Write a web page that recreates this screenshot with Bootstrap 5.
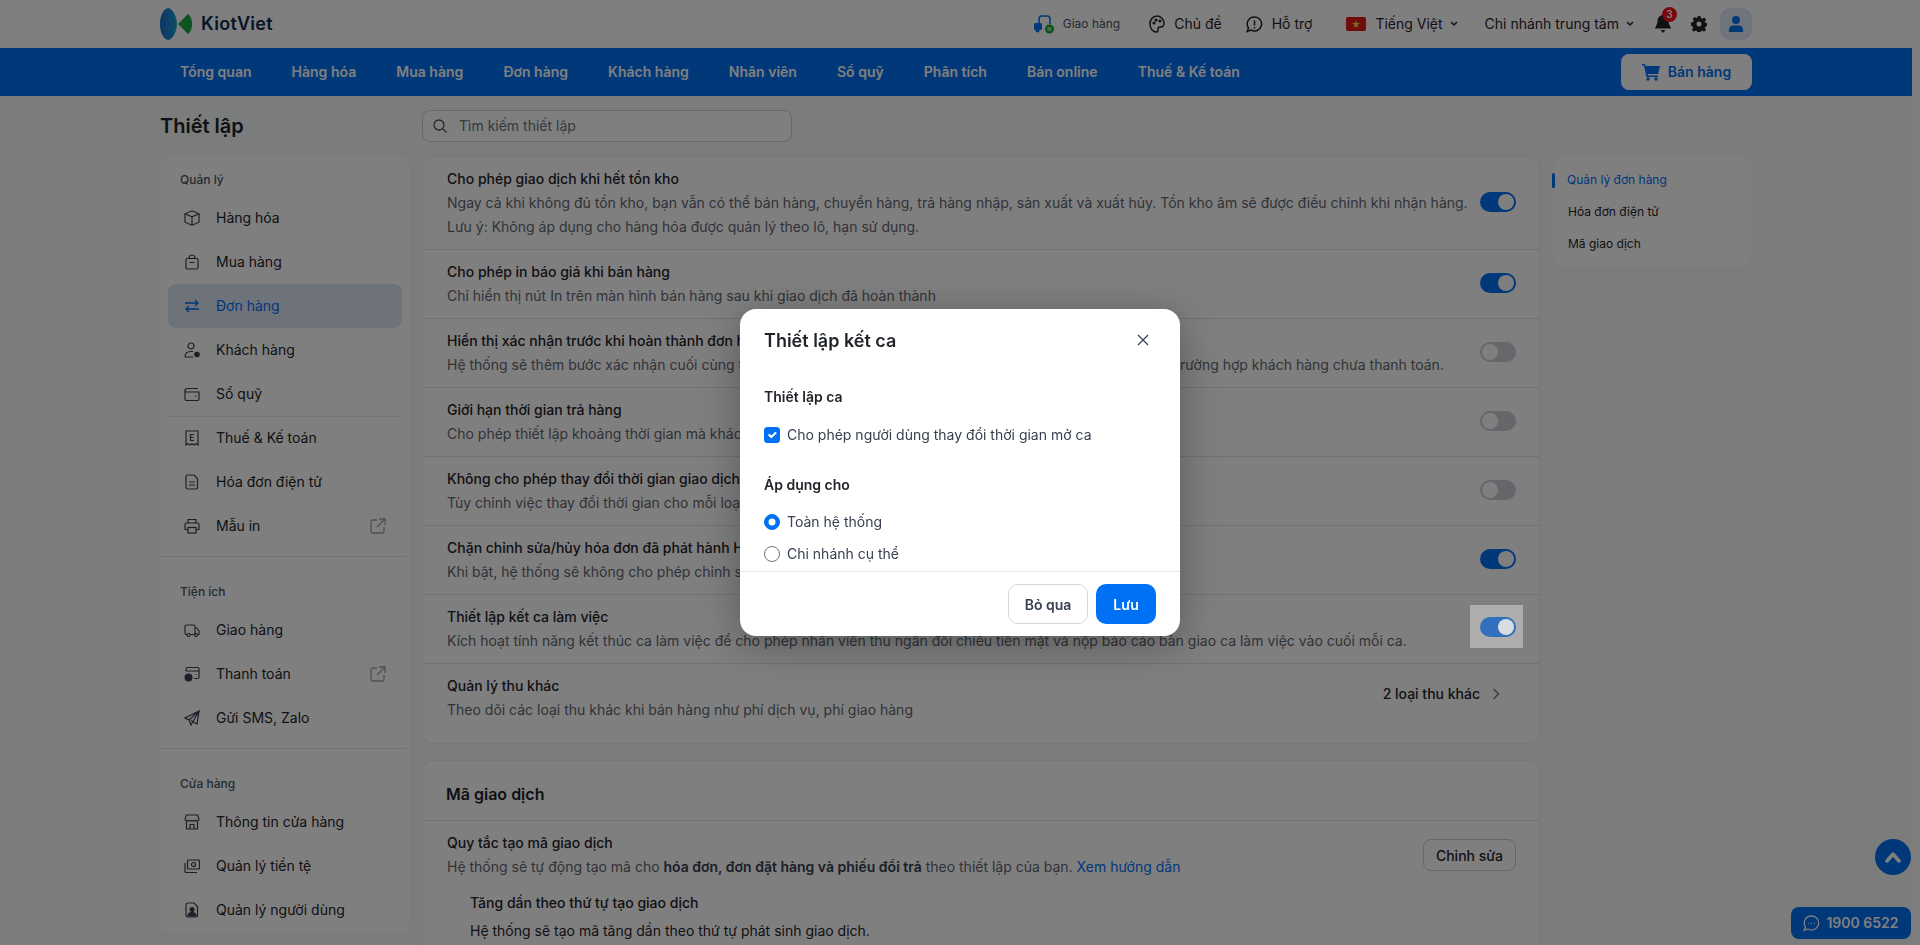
<!DOCTYPE html>
<html lang="vi">
<head>
    <meta charset="UTF-8">
    <title>KiotViet - Thiết lập</title>
    <link rel="stylesheet" href="https://cdn.jsdelivr.net/npm/bootstrap@5.3.0/dist/css/bootstrap.min.css">
    <style>
        html, body { height: 945px; overflow: hidden; }
        body { font-family: "Inter", "Liberation Sans", sans-serif; font-size: 14px; line-height: 24px; color: #1f2328; background: #fff; }
        .page-wrap { width: 1912px; height: 945px; overflow: hidden; background: #f6f9f8; }
        .top-bar { height: 48px; background: #fff; padding: 0 160px; }
        .logo-text { font-size: 18px; font-weight: 600; letter-spacing: .3px; color: #0d2b4e; margin-left: 9px; line-height: 24px; }
        .tb-small { font-size: 12px; color: #4b5563; }
        .tb-gh { margin-left: 9px; }
        .tb-theme { margin-left: 29px; }
        .tb-help { margin-left: 24px; }
        .tb-lang { margin-left: 34px; }
        .tb-branch { margin-left: 27px; }
        .tb-bell { margin-left: 21px; }
        .tb-gear { margin-left: 20px; }
        .tb-avatar { margin-left: 13px; width: 32px; height: 32px; border-radius: 10px; background: #dfe9f6; }
        .tb-label { margin-left: 9px; }
        .tb-chev { margin-left: 7px; }
        .bell-count { top: -8px; left: 7px; width: 15px; height: 15px; border-radius: 50%; background: #f01018; color: #fff; font-size: 10px; font-weight: 600; line-height: 15px; text-align: center; }
        .main-nav { height: 48px; background: #0070f4; padding: 0 160px 0 160px; }
        .nav-item-kv { color: #fff; font-weight: 600; padding: 0 20.06px; text-decoration: none; }
        .sell-btn { width: 131px; height: 36px; background: #fff; color: #0070f4; border-radius: 8px; font-weight: 600; text-decoration: none; }
        .content-wrap { padding: 14px 160px 0; }
        .page-head { height: 32px; margin-bottom: 14px; }
        .page-title { width: 250px; margin: 0; font-size: 20px; font-weight: 600; color: #1f2328; }
        .search-box { width: 370px; height: 32px; margin-left: 12px; border: 1px solid #cfd3d8; border-radius: 8px; background: #fff; padding-left: 10px; color: #6b7280; gap: 12px; }
        .side-panel { width: 250px; flex: none; height: 777px; background: #fff; border-radius: 12px; }
        .side-group { padding: 12px 0 8px; }
        .side-group + .side-group { padding-top: 23px; border-top: 1px solid #e4e6e8; margin-right: 4px; }
        .side-group:last-child { padding-bottom: 0; border-top-color: #e4e6e8; }
        .side-label { padding-left: 20px; margin-bottom: 4px; font-size: 12px; font-weight: 500; color: #4b5563; }
        .side-link { height: 44px; margin: 0 8px; width: 234px; padding-left: 16px; border-radius: 8px; color: #1f2328; text-decoration: none; }
        .side-link svg:first-child { margin-right: 16px; flex: none; }
        .side-link.is-active { background: #dde7f5; color: #0070f4; }
        .side-out { margin-left: auto; margin-right: 16px; }
        .side-rule { height: 1px; margin: 0 -4px -1px 8px; width: 230px; background: #e4e6e8; }
        .main-col { width: 1118px; flex: none; margin-left: 12px; }
        .set-card { background: #fff; border: 1px solid #eef0f0; border-radius: 12px; margin-bottom: 16px; }
        .set-row { padding: 10px 23px 10px 24px; border-bottom: 1px solid #e1e3e5; }
        .set-row:last-child { border-bottom: 0; padding-bottom: 21px; }
        .set-name { font-weight: 500; color: #1f2328; }
        .set-desc { color: #5f6670; }
        .set-desc b { font-weight: 600; color: #374151; }
        .set-desc a { color: #0070f4; text-decoration: none; }
        .sub-rule { padding: 12px 0 0 23px; }
        .card-head { padding: 21px 24px 14px 23px; border-bottom: 1px solid #e1e3e5; font-size: 16px; font-weight: 600; }
        .form-switch.kv-switch { margin: 0 0 3px; padding: 0; min-height: 0; height: 20px; }
        .form-switch.kv-switch .form-check-input { width: 36px; height: 20px; margin: 0; float: none; display: block; border: 0; background-color: #cdced6; background-position: left center; background-size: 20px 20px; background-image: url("data:image/svg+xml,%3csvg xmlns='http://www.w3.org/2000/svg' viewBox='-10 -10 20 20'%3e%3ccircle r='8' fill='%23fff'/%3e%3c/svg%3e"); }
        .form-switch.kv-switch .form-check-input:checked { background-color: #0070f4; background-position: right center; }
        .tour-spot { position: relative; z-index: 1051; width: 53px; height: 43px; margin: -5px -7px 0 0; padding-left: 3px; background: #adadad; }
        .tour-spot .form-check-input:checked { background-color: #3170bc !important; background-image: url("data:image/svg+xml,%3csvg xmlns='http://www.w3.org/2000/svg' viewBox='-10 -10 20 20'%3e%3ccircle r='8' fill='%23d9dde2'/%3e%3c/svg%3e") !important; }
        .fee-link { color: #1f2328; font-weight: 500; }
        .edit-btn { width: 93px; height: 32px; margin-top: 8px; padding: 0; font-size: 14px; font-weight: 500; color: #1f2328; background: #fff; border: 1px solid #c9cdd2; border-radius: 8px; }
        .toc-panel { width: 199px; height: 110px; flex: none; margin-left: 13px; padding: 8px 0 6px; background: #fff; border-radius: 12px; font-size: 12px; }
        .toc-item { height: 32px; padding-left: 15px; color: #1f2328; text-decoration: none; }
        .toc-item.is-active { padding-left: 0; color: #0070f4; }
        .toc-mark { width: 3px; height: 15px; margin: 0 12px 0 -1px; background: #0070f4; border-radius: 2px; }
        .to-top { right: 9px; bottom: 70px; width: 36px; height: 36px; border-radius: 50%; background: #0070f4; }
        .hotline { right: 9px; bottom: 6px; width: 120px; height: 32px; border-radius: 8px; background: #0070f4; color: #fff; font-weight: 600; gap: 6px; }
        .modal-dialog.kv-dialog { --bs-modal-width: 440px; }
        .kv-dialog .modal-content { border: 0; border-radius: 16px; box-shadow: 0 8px 40px rgba(0, 0, 0, .3); }
        .kv-dialog .modal-header { height: 62px; padding: 0 24px; border: 0; }
        .kv-dialog .modal-title { font-size: 18px; font-weight: 600; color: #1f2328; }
        .kv-dialog .modal-body { height: 200px; flex: none; padding: 14px 24px 0; overflow: hidden; }
        .kv-dialog .modal-footer { height: 65px; padding: 0 24px; gap: 8px; border-top: 1px solid #e5e7eb; }
        .kv-dialog .modal-footer > * { margin: 0; }
        .close-x { width: 16px; height: 16px; padding: 0; border: 0; background: none; margin-right: 5px; }
        .opt-title { font-weight: 600; color: #1f2328; }
        .kv-dialog .form-check { padding-left: 23px; margin-bottom: 0; min-height: 24px; color: #374151; }
        .kv-dialog .form-check-input { width: 16px; height: 16px; margin: 4px 0 0 -23px; border-color: #6b7280; }
        .kv-dialog .form-check-input[type=checkbox] { border-radius: 3px; }
        .kv-dialog .form-check-input:checked { background-color: #0070f4; border-color: #0070f4; }
        .gap-a { margin-top: 14px; }
        .gap-b { margin-top: 26px; }
        .gap-c { margin-top: 13px; }
        .gap-d { margin-top: 8px; }
        .skip-btn { width: 80px; height: 40px; padding: 0; font-size: 14px; font-weight: 600; color: #374151; background: #fff; border: 1px solid #d5d8dc; border-radius: 10px; }
        .save-btn { width: 60px; height: 40px; padding: 0; font-size: 14px; font-weight: 600; color: #fff; background: #0070f4; border: 0; border-radius: 10px; }
    </style>
</head>
<body>
    <div class="page-wrap">
        <!-- top bar -->
        <header class="top-bar d-flex align-items-center">
            <svg width="32" height="32" viewBox="0 0 32 32"><defs><linearGradient id="lens" x1="0" x2="1"><stop offset="0" stop-color="#1a6fc4"/><stop offset="1" stop-color="#1c9ad6"/></linearGradient></defs><path d="M8 0C3 1 0 8 0 16s3 15 8 16c4 0 9-8 9-16S12 0 8 0z" fill="url(#lens)"/><path d="M18 16L28 6c3 2 4 6 4 10s-1 8-4 10z" fill="#1ea83c"/></svg>
            <span class="logo-text">KiotViet</span>
            <div class="ms-auto d-flex align-items-center">
                <svg width="20" height="20" viewBox="0 0 20 20" fill="none"><path d="M5 9V5a3 3 0 0 1 3-3h5a3 3 0 0 1 3 3v5" stroke="#0070f4" stroke-width="1.500"/><rect x="0" y="9" width="8" height="7" rx="1.500" fill="#0070f4"/><circle cx="3.500" cy="16.500" r="2" fill="#0070f4"/><circle cx="15.500" cy="15" r="4.500" fill="#12a838"/><path d="M13.500 14h4M13.500 16h4" stroke="#fff"/></svg>
                <span class="tb-small tb-gh">Giao hàng</span>
                <svg class="tb-theme" width="16" height="18" viewBox="0 0 16 18" fill="none" stroke="#1f2328" stroke-width="1.500"><path d="M8 1C4 1 1 4.500 1 9s3 8 6.500 8c2 0 1.500-2.500 1.500-3.500S10 12 11.500 12 15 11.500 15 8 12 1 8 1z"/><circle cx="5" cy="8" r=".8"/><circle cx="7" cy="5" r=".8"/><circle cx="11" cy="6" r=".8"/></svg>
                <span class="tb-label">Chủ đề</span>
                <svg class="tb-help" width="17" height="17" viewBox="0 0 17 17" fill="none" stroke="#1f2328" stroke-width="1.500"><path d="M8.500 1a7 7 0 1 1-3.500 13L1 15.500 2.500 12A7 7 0 0 1 8.500 1z"/><path d="M8.500 4.500v5M8.500 11v1.500"/></svg>
                <span class="tb-label">Hỗ trợ</span>
                <svg class="tb-lang" width="20" height="14" viewBox="0 0 20 14"><rect width="20" height="14" rx="2" fill="#e01818"/><path d="M10 3l1 3h3l-2.500 2 1 3L10 9.200 7.500 11l1-3L6 6h3z" fill="#ffd83a"/></svg>
                <span class="tb-label">Tiếng Việt</span>
                <svg class="tb-chev" width="8" height="6" viewBox="0 0 8 6" fill="none" stroke="#1f2328" stroke-width="1.500"><path d="M1 1l3 3 3-3"/></svg>
                <span class="tb-branch">Chi nhánh trung tâm</span>
                <svg class="tb-chev" width="8" height="6" viewBox="0 0 8 6" fill="none" stroke="#1f2328" stroke-width="1.500"><path d="M1 1l3 3 3-3"/></svg>
                <span class="tb-bell position-relative d-flex">
                    <svg width="16" height="18" viewBox="0 0 16 18"><path d="M8 0c3.500 0 5.500 3 5.500 6.500 0 3 2.500 5.500 2.500 7H0c0-1.500 2.500-4 2.500-7C2.500 3 4.500 0 8 0z" fill="#1f2328"/><path d="M5.500 15h5L8 18z" fill="#1f2328"/></svg>
                    <span class="bell-count position-absolute">3</span>
                </span>
                <svg class="tb-gear" width="16" height="16" viewBox="0 0 16 16"><path fill-rule="evenodd" d="M6.500 0h3l.4 2.200 1.300.6 1.900-1.200 2 2-1.200 1.900.6 1.300 2.200.4v3l-2.200.4-.6 1.300 1.200 1.900-2 2-1.900-1.200-1.300.6-.4 2.200h-3l-.4-2.200-1.300-.6-1.900 1.200-2-2 1.200-1.900-.6-1.300L0 9.500v-3l2.200-.4.6-1.300L1.600 2.900l2-2 1.900 1.200 1.300-.6zM8 5.500a2.500 2.500 0 1 0 0 5 2.500 2.500 0 0 0 0-5z" fill="#1f2328"/></svg>
                <div class="tb-avatar d-flex align-items-center justify-content-center">
                    <svg width="14" height="16" viewBox="0 0 14 16" fill="#0070f4"><circle cx="7" cy="4" r="4"/><path d="M0 16v-2c0-3 2-4.500 4-4.500h6c2 0 4 1.500 4 4.500v2z"/></svg>
                </div>
            </div>
        </header>

        <!-- main nav -->
        <nav class="main-nav d-flex align-items-center">
            <a class="nav-item-kv" href="#">Tổng quan</a>
            <a class="nav-item-kv" href="#">Hàng hóa</a>
            <a class="nav-item-kv" href="#">Mua hàng</a>
            <a class="nav-item-kv" href="#">Đơn hàng</a>
            <a class="nav-item-kv" href="#">Khách hàng</a>
            <a class="nav-item-kv" href="#">Nhân viên</a>
            <a class="nav-item-kv" href="#">Sổ quỹ</a>
            <a class="nav-item-kv" href="#">Phân tích</a>
            <a class="nav-item-kv" href="#">Bán online</a>
            <a class="nav-item-kv" href="#">Thuế &amp; Kế toán</a>
            <a class="sell-btn ms-auto d-flex align-items-center justify-content-center gap-2" href="#">
                <svg width="18" height="18" viewBox="0 0 18 18" fill="#0070f4"><path d="M0 1h3l.6 2H18l-2 8H5.500L6 12.500h10V14H4.500L2 2.500H0z"/><circle cx="6" cy="16" r="1.700"/><circle cx="14" cy="16" r="1.700"/></svg>
                Bán hàng
            </a>
        </nav>

        <div class="content-wrap">
            <div class="page-head d-flex align-items-center">
                <h1 class="page-title">Thiết lập</h1>
                <div class="search-box d-flex align-items-center">
                    <svg width="14" height="14" viewBox="0 0 14 14" fill="none" stroke="#4b5563" stroke-width="1.300"><circle cx="6" cy="6" r="5"/><path d="M10 10l3.500 3.500"/></svg>
                    Tìm kiếm thiết lập
                </div>
            </div>

            <div class="d-flex align-items-start">
                <!-- sidebar -->
                <aside class="side-panel">
                    <div class="side-group">
                        <div class="side-label">Quản lý</div>
                        <a class="side-link d-flex align-items-center" href="#"><svg width="16" height="16" viewBox="0 0 16 16" fill="none" stroke="#374151" stroke-width="1.200"><path d="M8 .8l7 3v8.400l-7 3-7-3V3.800zM1 3.800l7 3 7-3M8 6.800v8.400"/></svg>Hàng hóa</a>
                        <a class="side-link d-flex align-items-center" href="#"><svg width="16" height="16" viewBox="0 0 16 16" fill="none" stroke="#374151" stroke-width="1.200"><rect x="2" y="4.500" width="12" height="10.500" rx="1.500"/><path d="M5 4.500C5 2 6.300 1 8 1s3 1 3 3.500M5.500 8.500h5"/></svg>Mua hàng</a>
                        <a class="side-link is-active d-flex align-items-center" href="#"><svg width="16" height="16" viewBox="0 0 16 16" fill="none" stroke="#0070f4" stroke-width="1.400"><path d="M1 5h13M11 2l3 3-3 3M15 11H2M5 8l-3 3 3 3"/></svg>Đơn hàng</a>
                        <a class="side-link d-flex align-items-center" href="#"><svg width="16" height="16" viewBox="0 0 16 16" fill="none" stroke="#374151" stroke-width="1.200"><circle cx="7" cy="4" r="3"/><path d="M1 15c0-4 2.500-5.500 6-5.500h2M1 15h8"/><circle cx="13" cy="12.500" r="2.200" fill="#374151"/></svg>Khách hàng</a>
                        <a class="side-link d-flex align-items-center" href="#"><svg width="16" height="16" viewBox="0 0 16 16" fill="none" stroke="#374151" stroke-width="1.200"><path d="M1 4.500A2 2 0 0 1 3 2.500h11M1 4.500V13a1.500 1.500 0 0 0 1.500 1.500h11A1.500 1.500 0 0 0 15 13V6H2.500A1.500 1.500 0 0 1 1 4.500z"/><path d="M11.500 10.200h1"/></svg>Sổ quỹ</a>
                        <div class="side-rule"></div>
                        <a class="side-link d-flex align-items-center" href="#"><svg width="16" height="16" viewBox="0 0 16 16" fill="none" stroke="#374151" stroke-width="1.200"><path d="M2 1h12v14l-2-1.200-2 1.200-2-1.200-2 1.200-2-1.200-2 1.200z"/><path d="M10 4.500H6.500v6H10M6.500 7.500H9.500"/></svg>Thuế &amp; Kế toán</a>
                        <a class="side-link d-flex align-items-center" href="#"><svg width="16" height="16" viewBox="0 0 16 16" fill="none" stroke="#374151" stroke-width="1.200"><path d="M3.500 1H10l3.500 3.500V13.500A1.500 1.500 0 0 1 12 15H3.500A1.500 1.500 0 0 1 2 13.500v-11A1.500 1.500 0 0 1 3.500 1zM5 8h6M5 11h6"/></svg>Hóa đơn điện tử</a>
                        <a class="side-link d-flex align-items-center" href="#"><svg width="16" height="16" viewBox="0 0 16 16" fill="none" stroke="#374151" stroke-width="1.200"><path d="M4 5V1.500h8V5M4 11.500H1V6.500A1.500 1.500 0 0 1 2.500 5h11A1.500 1.500 0 0 1 15 6.500v5h-3"/><rect x="4" y="9.500" width="8" height="5.500"/></svg>Mẫu in<svg class="side-out" width="16" height="16" viewBox="0 0 16 16" fill="none" stroke="#9ca3af" stroke-width="1.300"><path d="M7 2H2.500A1.500 1.500 0 0 0 1 3.500v10A1.500 1.500 0 0 0 2.500 15h10a1.500 1.500 0 0 0 1.500-1.500V9M9 1h6v6M15 1L7 9"/></svg></a>
                    </div>
                    <div class="side-group">
                        <div class="side-label">Tiện ích</div>
                        <a class="side-link d-flex align-items-center" href="#"><svg width="16" height="16" viewBox="0 0 16 16" fill="none" stroke="#374151" stroke-width="1.200"><path d="M3 12.500H2.500A1.500 1.500 0 0 1 1 11V4.500A1.500 1.500 0 0 1 2.500 3h7A1.500 1.500 0 0 1 11 4.500V12.500H6M11 6h2l2 3v3.500h-1.500"/><circle cx="4.500" cy="13" r="1.500"/><circle cx="12" cy="13" r="1.500"/></svg>Giao hàng</a>
                        <a class="side-link d-flex align-items-center" href="#"><svg width="16" height="16" viewBox="0 0 16 16" fill="none" stroke="#374151" stroke-width="1.200"><path d="M2 5V3a1.500 1.500 0 0 1 1.500-1.500h10A1.500 1.500 0 0 1 15 3v8a1.500 1.500 0 0 1-1.500 1.500H10M2 5h13M11.500 8.500h1"/><circle cx="4.500" cy="11.500" r="4" fill="#374151" stroke="none"/></svg>Thanh toán<svg class="side-out" width="16" height="16" viewBox="0 0 16 16" fill="none" stroke="#9ca3af" stroke-width="1.300"><path d="M7 2H2.500A1.500 1.500 0 0 0 1 3.500v10A1.500 1.500 0 0 0 2.500 15h10a1.500 1.500 0 0 0 1.500-1.500V9M9 1h6v6M15 1L7 9"/></svg></a>
                        <a class="side-link d-flex align-items-center" href="#"><svg width="16" height="16" viewBox="0 0 16 16" fill="none" stroke="#374151" stroke-width="1.200"><path d="M15 1L1 8l4 2 2 5zM15 1L5 10M15 1l-2 13-6-3.500"/></svg>Gửi SMS, Zalo</a>
                    </div>
                    <div class="side-group">
                        <div class="side-label">Cửa hàng</div>
                        <a class="side-link d-flex align-items-center" href="#"><svg width="16" height="16" viewBox="0 0 16 16" fill="none" stroke="#374151" stroke-width="1.200"><path d="M2.500 1h11L15 5a2 2 0 0 1-3.500 1.200 2.500 2.500 0 0 1-3.500 0 2.500 2.500 0 0 1-3.500 0A2 2 0 0 1 1 5zM2.500 7.500V15h11V7.500M6 15v-4.500h4V15"/></svg>Thông tin cửa hàng</a>
                        <a class="side-link d-flex align-items-center" href="#"><svg width="16" height="16" viewBox="0 0 16 16" fill="none" stroke="#374151" stroke-width="1.200"><rect x="3.500" y="2" width="12" height="9" rx="1"/><circle cx="9.500" cy="6.500" r="2"/><path d="M1 5v8.500A1 1 0 0 0 2 14.500h11"/></svg>Quản lý tiền tệ</a>
                        <a class="side-link d-flex align-items-center" href="#"><svg width="16" height="16" viewBox="0 0 16 16" fill="none" stroke="#374151" stroke-width="1.200"><path d="M3.500 1H10l3.500 3.500V13.500A1.500 1.500 0 0 1 12 15H3.500A1.500 1.500 0 0 1 2 13.500v-11A1.500 1.500 0 0 1 3.500 1z"/><circle cx="8" cy="7.500" r="2" fill="#374151"/><path d="M4 14c0-2.500 2-3.500 4-3.500s4 1 4 3.500z" fill="#374151"/></svg>Quản lý người dùng</a>
                    </div>
                </aside>

                <!-- settings -->
                <main class="main-col">
                    <section class="set-card">
                        <div class="set-row d-flex align-items-center justify-content-between">
                            <div>
                                <div class="set-name">Cho phép giao dịch khi hết tồn kho</div>
                                <div class="set-desc">Ngay cả khi không đủ tồn kho, bạn vẫn có thể bán hàng, chuyển hàng, trả hàng nhập, sản xuất và xuất hủy. Tồn kho âm sẽ được điều chỉnh khi nhận hàng.</div>
                                <div class="set-desc">Lưu ý: Không áp dụng cho hàng hóa được quản lý theo lô, hạn sử dụng.</div>
                            </div>
                            <div class="form-check form-switch kv-switch"><input class="form-check-input" type="checkbox" checked></div>
                        </div>
                        <div class="set-row d-flex align-items-center justify-content-between">
                            <div>
                                <div class="set-name">Cho phép in báo giá khi bán hàng</div>
                                <div class="set-desc">Chỉ hiển thị nút In trên màn hình bán hàng sau khi giao dịch đã hoàn thành</div>
                            </div>
                            <div class="form-check form-switch kv-switch"><input class="form-check-input" type="checkbox" checked></div>
                        </div>
                        <div class="set-row d-flex align-items-center justify-content-between">
                            <div>
                                <div class="set-name">Hiển thị xác nhận trước khi hoàn thành đơn hàng</div>
                                <div class="set-desc">Hệ thống sẽ thêm bước xác nhận cuối cùng trước khi hoàn thành đơn hàng, giúp hạn chế sai sót khi bán trong trường hợp khách hàng chưa thanh toán.</div>
                            </div>
                            <div class="form-check form-switch kv-switch"><input class="form-check-input" type="checkbox"></div>
                        </div>
                        <div class="set-row d-flex align-items-center justify-content-between">
                            <div>
                                <div class="set-name">Giới hạn thời gian trả hàng</div>
                                <div class="set-desc">Cho phép thiết lập khoảng thời gian mà khách hàng được phép trả hàng</div>
                            </div>
                            <div class="form-check form-switch kv-switch"><input class="form-check-input" type="checkbox"></div>
                        </div>
                        <div class="set-row d-flex align-items-center justify-content-between">
                            <div>
                                <div class="set-name">Không cho phép thay đổi thời gian giao dịch</div>
                                <div class="set-desc">Tùy chỉnh việc thay đổi thời gian cho mỗi loại giao dịch</div>
                            </div>
                            <div class="form-check form-switch kv-switch"><input class="form-check-input" type="checkbox"></div>
                        </div>
                        <div class="set-row d-flex align-items-center justify-content-between">
                            <div>
                                <div class="set-name">Chặn chỉnh sửa/hủy hóa đơn đã phát hành HĐĐT</div>
                                <div class="set-desc">Khi bật, hệ thống sẽ không cho phép chỉnh sửa hoặc hủy hóa đơn đã phát hành</div>
                            </div>
                            <div class="form-check form-switch kv-switch"><input class="form-check-input" type="checkbox" checked></div>
                        </div>
                        <div class="set-row d-flex align-items-center justify-content-between">
                            <div>
                                <div class="set-name">Thiết lập kết ca làm việc</div>
                                <div class="set-desc">Kích hoạt tính năng kết thúc ca làm việc để cho phép nhân viên thu ngân đối chiếu tiền mặt và nộp báo cáo bàn giao ca làm việc vào cuối mỗi ca.</div>
                            </div>
                            <div class="tour-spot d-flex align-items-center justify-content-center">
                                <div class="form-check form-switch kv-switch mb-0"><input class="form-check-input" type="checkbox" checked></div>
                            </div>
                        </div>
                        <div class="set-row d-flex align-items-start justify-content-between">
                            <div>
                                <div class="set-name">Quản lý thu khác</div>
                                <div class="set-desc">Theo dõi các loại thu khác khi bán hàng như phí dịch vụ, phí giao hàng</div>
                            </div>
                            <div class="fee-link d-flex align-items-center gap-2 mt-2 pe-3">2 loại thu khác
                                <svg class="ms-1" width="8" height="12" viewBox="0 0 8 12" fill="none" stroke="#6b7280" stroke-width="1.300"><path d="M1.500 1l5 5-5 5"/></svg>
                            </div>
                        </div>
                    </section>

                    <section class="set-card">
                        <div class="card-head">Mã giao dịch</div>
                        <div class="set-row d-flex align-items-start justify-content-between">
                            <div>
                                <div class="set-name">Quy tắc tạo mã giao dịch</div>
                                <div class="set-desc">Hệ thống sẽ tự động tạo mã cho <b>hóa đơn, đơn đặt hàng và phiếu đổi trả</b> theo thiết lập của bạn. <a href="#">Xem hướng dẫn</a></div>
                                <div class="sub-rule">
                                    <div class="set-name">Tăng dần theo thứ tự tạo giao dịch</div>
                                    <div class="mt-1">Hệ thống sẽ tạo mã tăng dần theo thứ tự phát sinh giao dịch.</div>
                                </div>
                            </div>
                            <button class="btn edit-btn" type="button">Chỉnh sửa</button>
                        </div>
                    </section>
                </main>

                <!-- section links -->
                <div class="toc-panel">
                    <a class="toc-item is-active d-flex align-items-center" href="#"><span class="toc-mark"></span>Quản lý đơn hàng</a>
                    <a class="toc-item d-flex align-items-center" href="#">Hóa đơn điện tử</a>
                    <a class="toc-item d-flex align-items-center" href="#">Mã giao dịch</a>
                </div>
            </div>
        </div>
    </div>

    <div class="to-top position-fixed d-flex align-items-center justify-content-center">
        <svg width="16" height="12" viewBox="0 0 16 12" fill="none" stroke="#fff" stroke-width="3.500" stroke-linecap="round" stroke-linejoin="round"><path d="M2 10l6-7 6 7"/></svg>
    </div>
    <div class="hotline position-fixed d-flex align-items-center justify-content-center">
        <svg width="17" height="17" viewBox="0 0 17 17" fill="none" stroke="#fff" stroke-width="1.300"><path d="M8.500 1a7 7 0 1 1-3.500 13L1 15.500 2.500 12A7 7 0 0 1 8.500 1z"/><path d="M5.500 8.500h.8M8.200 8.500h.8M10.900 8.500h.8" stroke-width="1.500"/></svg>
        1900 6522
    </div>

    <div class="modal-backdrop fade show"></div>
    <div class="modal d-block" tabindex="-1">
        <div class="modal-dialog modal-dialog-centered kv-dialog">
            <div class="modal-content">
                <div class="modal-header d-flex justify-content-between">
                    <h5 class="modal-title">Thiết lập kết ca</h5>
                    <button class="close-x d-flex" type="button" aria-label="Close"><svg width="16" height="16" viewBox="0 0 16 16" fill="none" stroke="#374151" stroke-width="1.300"><path d="M3 3l10 10M13 3L3 13"/></svg></button>
                </div>
                <div class="modal-body">
                    <div class="opt-title">Thiết lập ca</div>
                    <div class="form-check gap-a">
                        <input class="form-check-input" type="checkbox" id="allowOpen" checked>
                        <label class="form-check-label" for="allowOpen">Cho phép người dùng thay đổi thời gian mở ca</label>
                    </div>
                    <div class="opt-title gap-b">Áp dụng cho</div>
                    <div class="form-check gap-c">
                        <input class="form-check-input" type="radio" name="scope" id="scopeAll" checked>
                        <label class="form-check-label" for="scopeAll">Toàn hệ thống</label>
                    </div>
                    <div class="form-check gap-d">
                        <input class="form-check-input" type="radio" name="scope" id="scopeBranch">
                        <label class="form-check-label" for="scopeBranch">Chi nhánh cụ thể</label>
                    </div>
                </div>
                <div class="modal-footer">
                    <button class="btn skip-btn" type="button">Bỏ qua</button>
                    <button class="btn save-btn" type="button">Lưu</button>
                </div>
            </div>
        </div>
    </div>

    <script src="https://cdn.jsdelivr.net/npm/bootstrap@5.3.0/dist/js/bootstrap.bundle.min.js"></script>
</body>
</html>
